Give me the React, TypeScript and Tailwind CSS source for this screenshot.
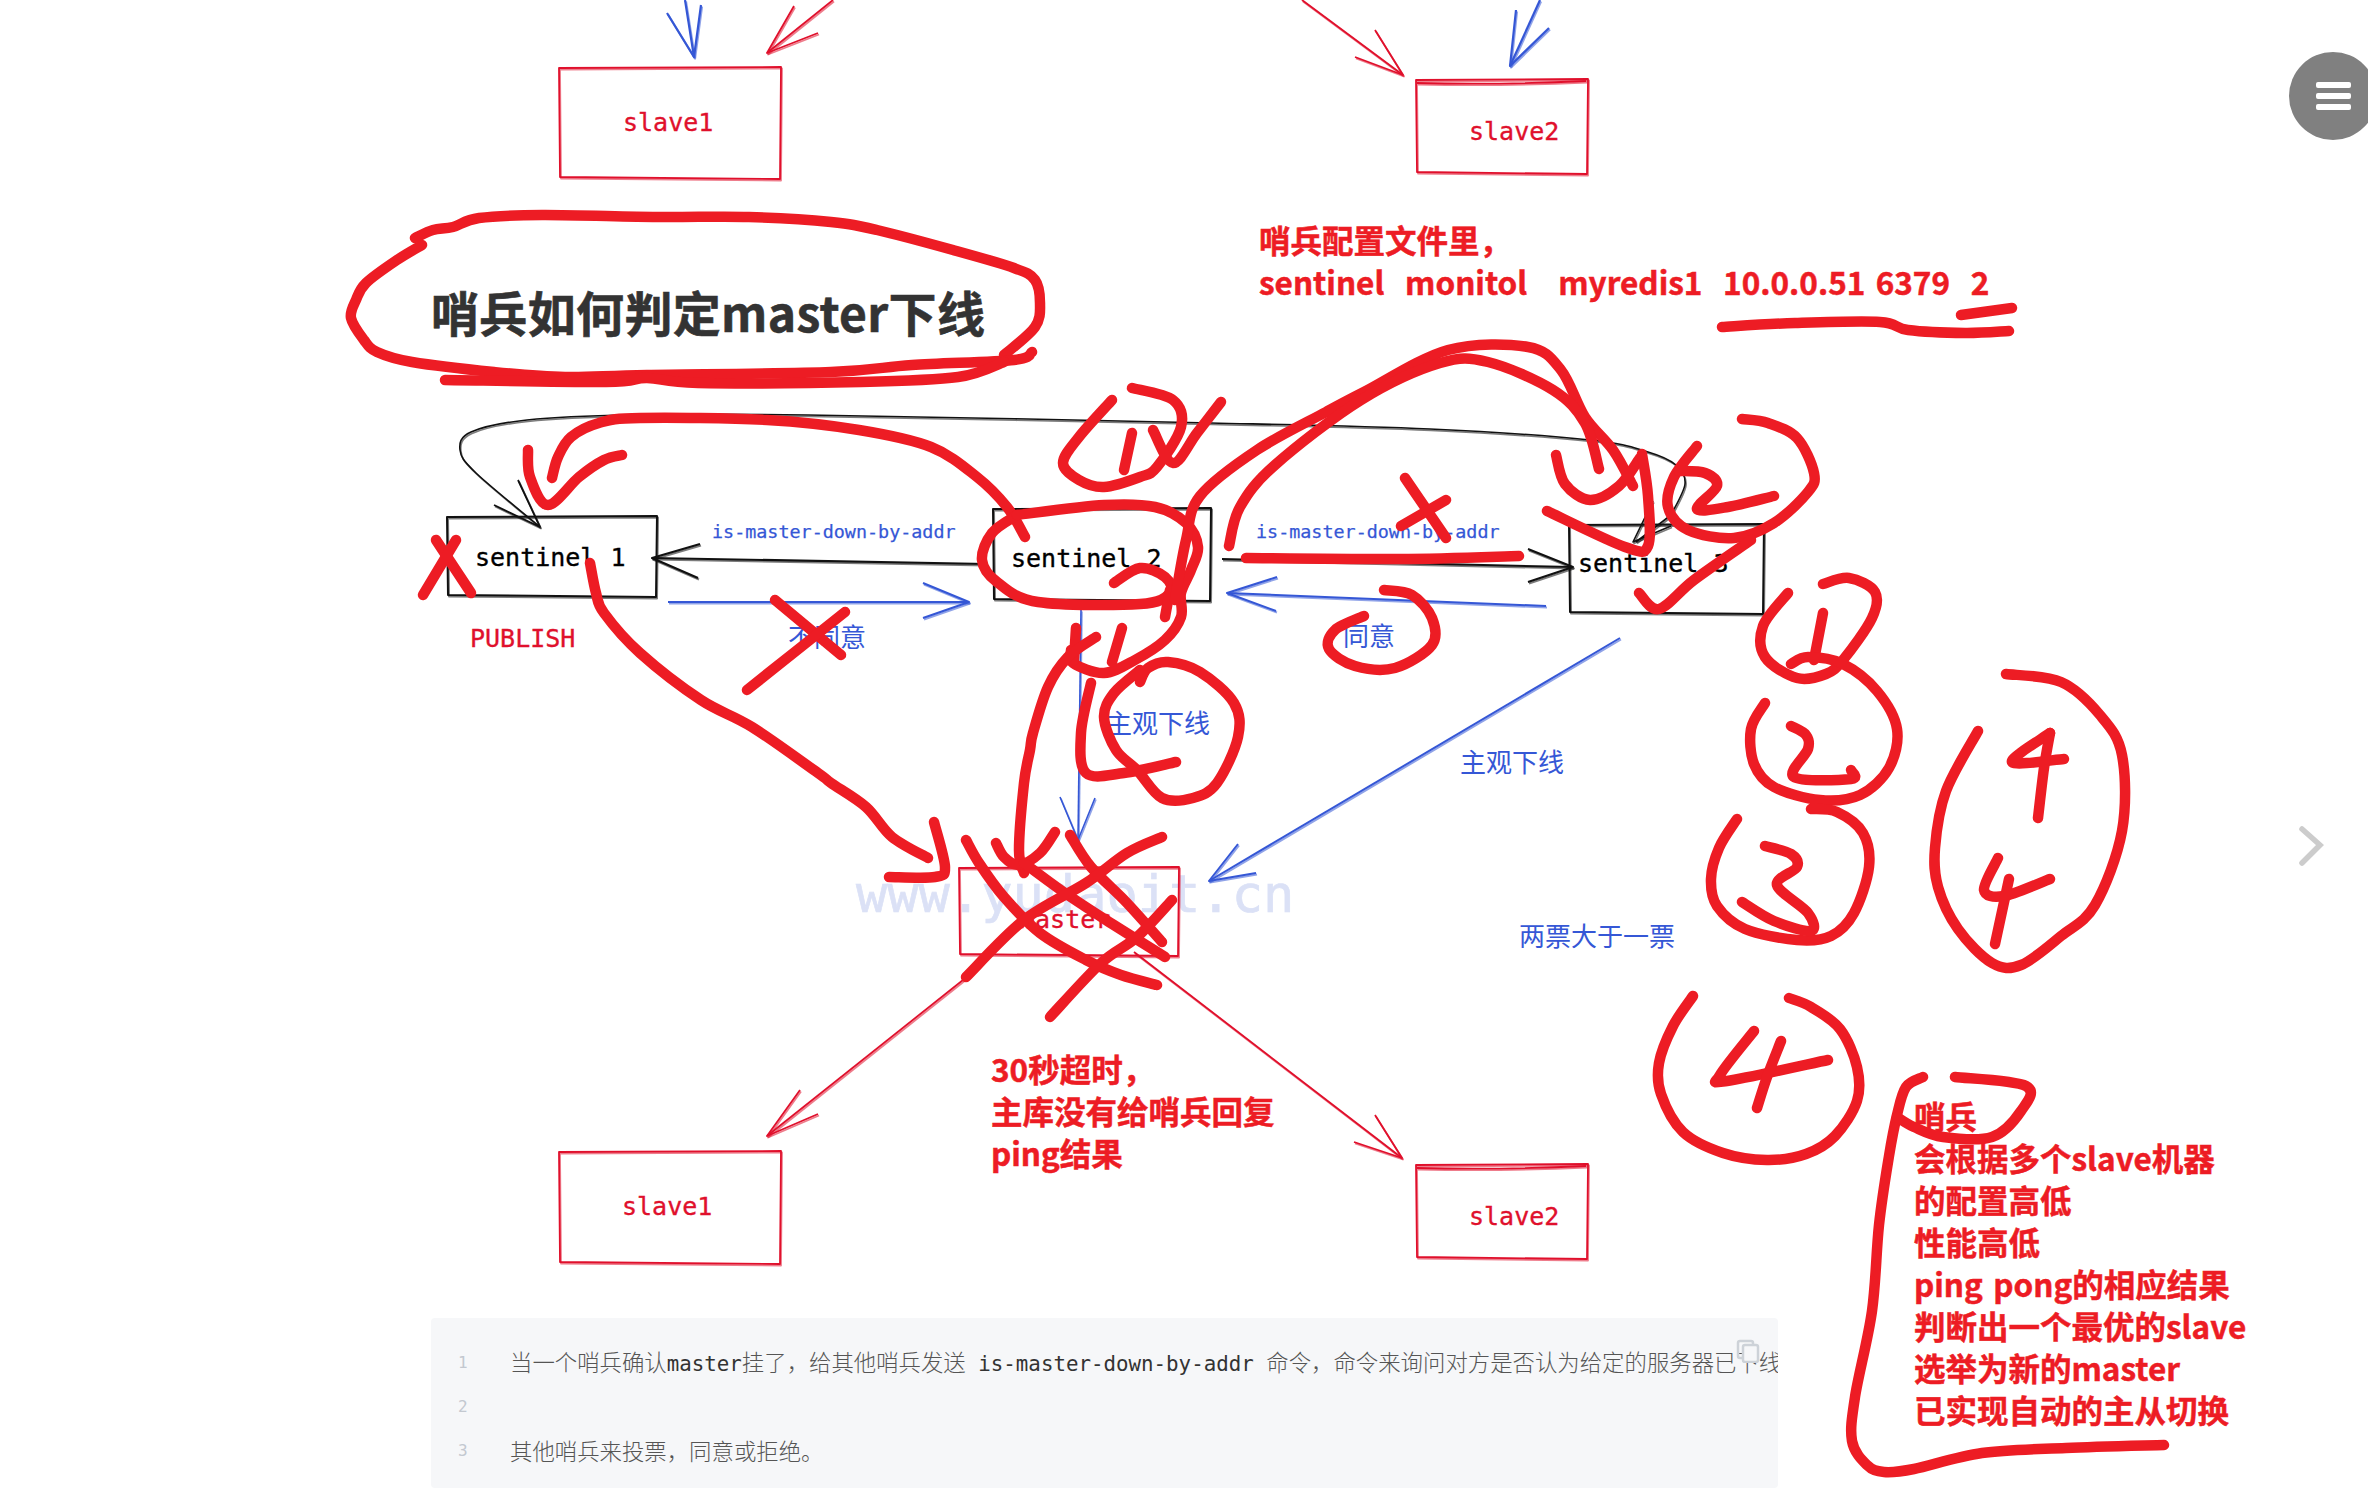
const RED = '#ed1c24';
const THIN_RED = '#e0102c';
const BLUE = '#3557d6';
const BLACK = '#111111';

const mono = "font-['DejaVu_Sans_Mono',monospace]";
const cjk = "font-['Noto_Sans_CJK_SC',sans-serif]";

// flat x,y list -> smooth path (catmull-rom)
function spline(p: number[]) {
  const pts: [number, number][] = [];
  for (let i = 0; i < p.length; i += 2) pts.push([p[i], p[i + 1]]);
  let d = `M${pts[0][0]} ${pts[0][1]}`;
  for (let i = 0; i < pts.length - 1; i++) {
    const a = pts[Math.max(i - 1, 0)];
    const b = pts[i];
    const c = pts[i + 1];
    const e = pts[Math.min(i + 2, pts.length - 1)];
    const c1x = (b[0] + (c[0] - a[0]) / 6).toFixed(1);
    const c1y = (b[1] + (c[1] - a[1]) / 6).toFixed(1);
    const c2x = (c[0] - (e[0] - b[0]) / 6).toFixed(1);
    const c2y = (c[1] - (e[1] - b[1]) / 6).toFixed(1);
    d += ` C${c1x} ${c1y} ${c2x} ${c2y} ${c[0]} ${c[1]}`;
  }
  return d;
}

type Thin = { d: string; color: string; w?: number };

const arrow = (tail: number[], tip: number[], b1: number[], b2: number[], color: string, w = 1.8): Thin[] => [
  { d: `M${tail[0]} ${tail[1]} L${tip[0]} ${tip[1]}`, color, w },
  { d: `M${b1[0]} ${b1[1]} L${tip[0]} ${tip[1]} L${b2[0]} ${b2[1]}`, color, w },
];

const rect = (x1: number, y1: number, x2: number, y2: number, color: string, w = 1.8): Thin[] => [
  { d: `M${x1} ${y1} L${x2 + 1} ${y1 - 1} L${x2} ${y2 + 1} L${x1 + 1} ${y2 - 1} Z`, color, w },
];

const sketchLines: Thin[] = [
  ...rect(559, 68, 780, 178, THIN_RED),
  ...arrow([685, 0], [694, 57], [667, 13], [701, 5], BLUE, 2.2),
  ...arrow([833, 0], [767, 53], [794, 6], [818, 33], THIN_RED),
  ...arrow([1302, 0], [1403, 75], [1375, 30], [1355, 57], THIN_RED),
  ...arrow([1540, 0], [1510, 66], [1516, 10], [1549, 28], BLUE, 2.2),
  ...rect(1416, 80, 1587, 173, THIN_RED),
  { d: 'M1417 83 Q1500 85 1586 81', color: THIN_RED, w: 1.8 },

  ...rect(447, 517, 656, 596, BLACK, 2),
  ...rect(993, 509, 1210, 600, BLACK, 2),
  ...rect(1569, 525, 1763, 613, BLACK, 2),
  {
    d: spline([1671, 515, 1685, 484, 1676, 465, 1648, 452, 1590, 440, 1430, 429, 1211, 423, 808, 415, 630, 415, 527, 420, 471, 432, 460, 450, 476, 473, 540, 527]),
    color: BLACK,
    w: 1.6,
  },
  { d: 'M518 480 L540 527 L494 505', color: BLACK, w: 1.8 },
  { d: 'M1671 515 L1636 542', color: BLACK, w: 1.6 },
  { d: 'M1653 501 L1633 542 L1671 526', color: BLACK, w: 1.6 },
  ...arrow([987, 564], [652, 558], [700, 544], [698, 578], BLACK, 2.2),
  ...arrow([1222, 559], [1573, 567], [1528, 549], [1528, 582], BLACK, 2),

  ...arrow([668, 602], [969, 602], [923, 583], [923, 618], BLUE, 2),
  ...arrow([1546, 606], [1227, 593], [1277, 577], [1276, 611], BLUE, 2),
  ...arrow([1081, 610], [1078, 840], [1060, 797], [1095, 798], BLUE, 1.6),
  ...arrow([1620, 638], [1209, 881], [1238, 844], [1256, 873], BLUE, 2),

  ...rect(959, 868, 1178, 955, THIN_RED),
  ...arrow([963, 980], [767, 1136], [800, 1090], [818, 1114], THIN_RED),
  ...arrow([1134, 952], [1402, 1158], [1375, 1115], [1354, 1142], THIN_RED),
  ...rect(559, 1152, 780, 1263, THIN_RED),
  ...rect(1416, 1165, 1587, 1258, THIN_RED),
  { d: 'M1417 1168 Q1500 1170 1586 1166', color: THIN_RED, w: 1.8 },
];

const scribbles: number[][] = [
  // title ring
  [415, 238, 433, 230, 453, 227, 479, 218, 542, 215, 657, 217, 749, 217, 831, 222, 877, 230, 953, 250, 1014, 268, 1035, 280, 1040, 303, 1035, 327, 1004, 355],
  [422, 245, 397, 260, 366, 283, 356, 300, 351, 318, 364, 340, 377, 352, 412, 362, 494, 372, 565, 377, 647, 375, 831, 372, 912, 365, 1014, 360, 1032, 352],
  [445, 380, 606, 382, 647, 378, 698, 383, 861, 382, 958, 377, 1004, 362],
  // underlines of the config line
  [1722, 327, 1795, 323, 1880, 322, 1908, 330, 1965, 333, 2009, 331],
  [1961, 315, 2012, 308],
  // sentinel 1 marks
  [436, 540, 471, 593],
  [456, 540, 423, 595],
  [528, 450, 530, 477, 548, 505, 579, 477, 604, 460, 622, 455],
  [1025, 537, 1007, 507, 977, 477, 931, 447, 859, 430, 767, 420, 640, 418, 599, 423, 571, 437, 558, 457, 552, 478],
  // 不同意 cross
  [775, 600, 841, 655],
  [845, 612, 747, 690],
  // sentinel 2 ring and circled 1
  [1017, 515, 992, 533, 982, 560, 997, 582, 1038, 602, 1140, 604, 1170, 593, 1165, 577, 1140, 568, 1114, 583],
  [1017, 515, 1104, 505, 1155, 507, 1186, 523, 1198, 547, 1191, 570, 1181, 593, 1181, 617, 1165, 640, 1135, 660, 1104, 673, 1073, 663, 1071, 650],
  [1165, 617, 1170, 590],
  [1076, 628, 1074, 660],
  [1096, 637, 1068, 657, 1048, 687, 1033, 733, 1030, 750, 1024, 783, 1019, 850, 1024, 873],
  [1122, 628, 1112, 662],
  // ring around 主观下线
  [1140, 682, 1148, 668, 1168, 662, 1200, 672, 1234, 703, 1238, 737, 1217, 783, 1193, 798, 1162, 798, 1137, 770, 1116, 750, 1104, 717, 1114, 693, 1140, 670],
  [1091, 683, 1081, 733, 1086, 773, 1124, 773, 1176, 762],
  // curve from sentinel 1 into master
  [590, 563, 596, 593, 604, 613, 640, 653, 701, 700, 752, 727, 818, 773, 831, 783, 866, 807, 892, 837, 928, 858],
  [934, 822, 945, 867, 935, 877, 889, 877],
  // master cross hatch
  [966, 840, 979, 863, 1004, 897, 1040, 933, 1086, 960, 1121, 975, 1157, 985],
  [996, 843, 1004, 857, 1019, 865, 1040, 853, 1055, 832],
  [1024, 863, 1065, 893, 1106, 920, 1165, 957],
  [1070, 835, 1091, 867, 1127, 903, 1162, 942],
  [1162, 837, 1127, 853, 1086, 883, 1024, 920, 966, 977],
  [1172, 900, 1137, 937, 1101, 963, 1050, 1017],
  // circled 1 at the top of sentinel 2
  [1112, 400, 1079, 437, 1063, 463, 1079, 480, 1104, 487, 1140, 477, 1157, 467, 1181, 427, 1173, 400, 1132, 388],
  [1132, 433, 1124, 470],
  [1153, 430, 1173, 463, 1197, 433, 1221, 402],
  // big arcs from sentinel 2 to sentinel 3
  [1175, 600, 1186, 540, 1200, 496, 1257, 450, 1326, 412, 1364, 392, 1448, 350, 1528, 347, 1561, 370, 1585, 417, 1613, 450, 1633, 486],
  [1229, 546, 1240, 507, 1275, 465, 1361, 400, 1440, 363, 1488, 362, 1553, 390, 1585, 423, 1599, 469],
  // sentinel 3 marks
  [1246, 558, 1400, 559, 1519, 556],
  [1405, 478, 1446, 538],
  [1446, 500, 1401, 526],
  [1384, 590, 1412, 595, 1432, 618, 1432, 645, 1395, 668, 1355, 666, 1329, 649, 1335, 630, 1364, 616],
  [1556, 455, 1565, 484, 1590, 500, 1619, 486, 1640, 458],
  [1642, 454, 1648, 496, 1648, 546, 1625, 547, 1547, 511],
  [1697, 446, 1674, 477, 1668, 507, 1688, 530, 1734, 538, 1774, 523, 1808, 492, 1814, 473, 1797, 438, 1768, 423, 1742, 419],
  [1679, 471, 1705, 473, 1717, 486, 1697, 509, 1728, 507, 1774, 496],
  [1639, 593, 1659, 609, 1694, 580, 1751, 540],
  // votes column
  [1823, 584, 1849, 578, 1875, 592, 1872, 618, 1843, 660, 1826, 674, 1797, 678, 1765, 657, 1763, 626, 1788, 593],
  [1823, 613, 1814, 660],
  [1791, 664, 1808, 657, 1843, 664, 1877, 691, 1897, 729, 1889, 768, 1860, 795, 1820, 800, 1774, 787, 1754, 764, 1751, 729, 1765, 703],
  [1791, 726, 1806, 735, 1808, 749, 1794, 777, 1851, 779, 1851, 770],
  [1811, 809, 1837, 812, 1863, 833, 1869, 867, 1854, 913, 1831, 936, 1797, 940, 1745, 929, 1717, 906, 1711, 879, 1719, 848, 1737, 819],
  [1765, 846, 1791, 854, 1797, 867, 1777, 885, 1808, 913, 1811, 931, 1774, 921, 1742, 902],
  [2006, 674, 2061, 682, 2100, 715, 2122, 755, 2122, 831, 2095, 905, 2061, 936, 2021, 965, 1992, 963, 1958, 929, 1938, 887, 1935, 848, 1946, 791, 1978, 731],
  [2050, 733, 2012, 762, 2064, 759],
  [2050, 733, 2044, 768, 2038, 818],
  [1998, 858, 1984, 890, 2004, 896, 2050, 879],
  [2009, 879, 1995, 944],
  // circled 4
  [1789, 998, 1811, 1007, 1840, 1029, 1857, 1067, 1857, 1101, 1835, 1136, 1806, 1154, 1767, 1160, 1723, 1153, 1683, 1132, 1661, 1094, 1659, 1063, 1673, 1026, 1693, 996],
  [1754, 1031, 1720, 1075, 1727, 1081, 1828, 1060],
  [1781, 1041, 1767, 1077, 1757, 1108],
  // bracket round the right hand note
  [1923, 1077, 1906, 1087, 1897, 1115, 1889, 1156, 1879, 1225, 1872, 1311, 1855, 1397, 1852, 1441, 1867, 1465, 1884, 1472, 1914, 1469, 1982, 1453, 2066, 1448, 2164, 1445],
  [1955, 1077, 2026, 1086, 2021, 1111, 1992, 1137, 1943, 1137, 1914, 1127, 1897, 1117],
];

const noteLines = [
  '哨兵',
  '会根据多个slave机器',
  '的配置高低',
  '性能高低',
  'ping pong的相应结果',
  '判断出一个最优的slave',
  '选举为新的master',
  '已实现自动的主从切换',
];

function Diagram() {
  const labelBlue = `absolute ${cjk} text-[26px] leading-[36px] text-[#3557d6] whitespace-nowrap`;
  const labelMono = `absolute ${mono} text-[25px] leading-[30px] [-webkit-text-stroke:0.35px] whitespace-nowrap`;
  const addr = `absolute ${mono} text-[18.4px] leading-[24px] text-[#3557d6] [-webkit-text-stroke:0.25px] whitespace-nowrap`;
  const note = `${cjk} text-[31.5px] leading-[42px] font-bold text-[#ed1c24] [-webkit-text-stroke:0.5px] [word-spacing:3.2px] whitespace-pre`;

  return (
    <div className="relative h-[1318px]">
      <div className={`absolute left-[856px] top-[864px] ${mono} text-[52px] leading-[60px] text-[#dbe1f6] [-webkit-text-stroke:0.7px] whitespace-nowrap`}>
        www.yudaoit.cn
      </div>

      <svg className="absolute top-0 left-0" width={2368} height={1318} viewBox="0 0 2368 1318" fill="none">
        {sketchLines.map((l, i) => (
          <g key={i} stroke={l.color} strokeWidth={l.w} strokeLinejoin="round">
            <path d={l.d} />
            <path d={l.d} transform="translate(1 1.5)" opacity={0.55} />
          </g>
        ))}
      </svg>

      <span className={`${labelMono} left-[623px] top-[108px] text-[#e0102c]`}>slave1</span>
      <span className={`${labelMono} left-[1469px] top-[117px] text-[#e0102c]`}>slave2</span>
      <span className={`${labelMono} left-[622px] top-[1192px] text-[#e0102c]`}>slave1</span>
      <span className={`${labelMono} left-[1469px] top-[1202px] text-[#e0102c]`}>slave2</span>
      <span className={`${labelMono} left-[1020px] top-[905px] text-[#e0102c]`}>master</span>
      <span className={`${labelMono} left-[470px] top-[624px] text-[#e0102c]`}>PUBLISH</span>

      <span className={`${labelMono} left-[475px] top-[543px] text-black`}>sentinel 1</span>
      <span className={`${labelMono} left-[1011px] top-[544px] text-black`}>sentinel 2</span>
      <span className={`${labelMono} left-[1578px] top-[549px] text-black`}>sentinel 3</span>

      <span className={`${addr} left-[712px] top-[520px]`}>is-master-down-by-addr</span>
      <span className={`${addr} left-[1256px] top-[520px]`}>is-master-down-by-addr</span>

      <span className={`${labelBlue} left-[788px] top-[618px]`}>不同意</span>
      <span className={`${labelBlue} left-[1343px] top-[617px]`}>同意</span>
      <span className={`${labelBlue} left-[1106px] top-[704px]`}>主观下线</span>
      <span className={`${labelBlue} left-[1460px] top-[743px]`}>主观下线</span>
      <span className={`${labelBlue} left-[1519px] top-[917px]`}>两票大于一票</span>

      <h1 className={`absolute left-[431px] top-[278px] ${cjk} text-[48px] leading-[66px] font-bold tracking-[0.35px] text-[#333333] [-webkit-text-stroke:0.6px] whitespace-nowrap`}>
        哨兵如何判定master下线
      </h1>

      <div className={`absolute left-[1259px] top-[218px] ${note}`}>
        <p>哨兵配置文件里，</p>
        <p>{'sentinel  monitol   myredis1  10.0.0.51 6379  2'}</p>
      </div>

      <div className={`absolute left-[991px] top-[1047px] ${note}`}>
        <p>30秒超时，</p>
        <p>主库没有给哨兵回复</p>
        <p>ping结果</p>
      </div>

      <div className={`absolute left-[1914px] top-[1094px] ${note} z-[5]`}>
        {noteLines.map((line) => (
          <p key={line}>{line}</p>
        ))}
      </div>
    </div>
  );
}

function CodeBlock() {
  const num = `${mono} w-[79px] shrink-0 pl-[27px] text-[16px] text-[#c3c8d0]`;
  const zh = `${cjk} text-[22.4px] font-light text-[#555555]`;
  const code = `${mono} text-[20.8px] text-[#333333]`;

  return (
    <div className="relative ml-[431px] w-[1347px] h-[170px] rounded-[4px] bg-[#f6f7f9] overflow-hidden">
      <div className="flex flex-col pt-[23px]">
        <div className="flex items-center h-[44px] whitespace-pre">
          <span className={num}>1</span>
          <p>
            <span className={zh}>当一个哨兵确认</span>
            <span className={code}>master</span>
            <span className={zh}>挂了，给其他哨兵发送</span>
            <span className={code}> is-master-down-by-addr </span>
            <span className={zh}>命令，命令来询问对方是否认为给定的服务器已下线</span>
          </p>
        </div>
        <div className="flex items-center h-[44px]">
          <span className={num}>2</span>
        </div>
        <div className="flex items-center h-[44px]">
          <span className={num}>3</span>
          <p className={zh}>其他哨兵来投票，同意或拒绝。</p>
        </div>
      </div>
      <svg className="absolute left-[1305px] top-[21px]" width={24} height={24} viewBox="0 0 24 24" fill="none" stroke="#cdd2d8" strokeWidth={2.5}>
        <rect x="2" y="2" width="15" height="17" rx="2" />
        <rect x="7" y="6" width="15" height="17" rx="2" fill="#f6f7f9" />
      </svg>
    </div>
  );
}

export default function App() {
  return (
    <div className="relative w-full h-[1488px] overflow-hidden bg-white">
      <Diagram />
      <CodeBlock />

      <svg className="absolute inset-0 z-10 pointer-events-none" width={2368} height={1488} viewBox="0 0 2368 1488" fill="none">
        {scribbles.map((p, i) => (
          <path key={i} d={spline(p)} stroke={RED} strokeWidth={10.5} strokeLinecap="round" strokeLinejoin="round" />
        ))}
      </svg>

      <button className="absolute left-[2289px] top-[52px] z-20 flex h-[88px] w-[88px] flex-col items-center justify-center gap-[5px] rounded-full bg-[#808080]">
        <span className="h-[6px] w-[35px] rounded-[2px] bg-white" />
        <span className="h-[6px] w-[35px] rounded-[2px] bg-white" />
        <span className="h-[6px] w-[35px] rounded-[2px] bg-white" />
      </button>

      <svg className="absolute left-[2296px] top-[824px] z-20" width={30} height={44} viewBox="0 0 30 44" fill="none" stroke="#cccccc" strokeWidth={5.5} strokeLinecap="round">
        <path d="M6 5 L24 21 L6 39" />
      </svg>
    </div>
  );
}
